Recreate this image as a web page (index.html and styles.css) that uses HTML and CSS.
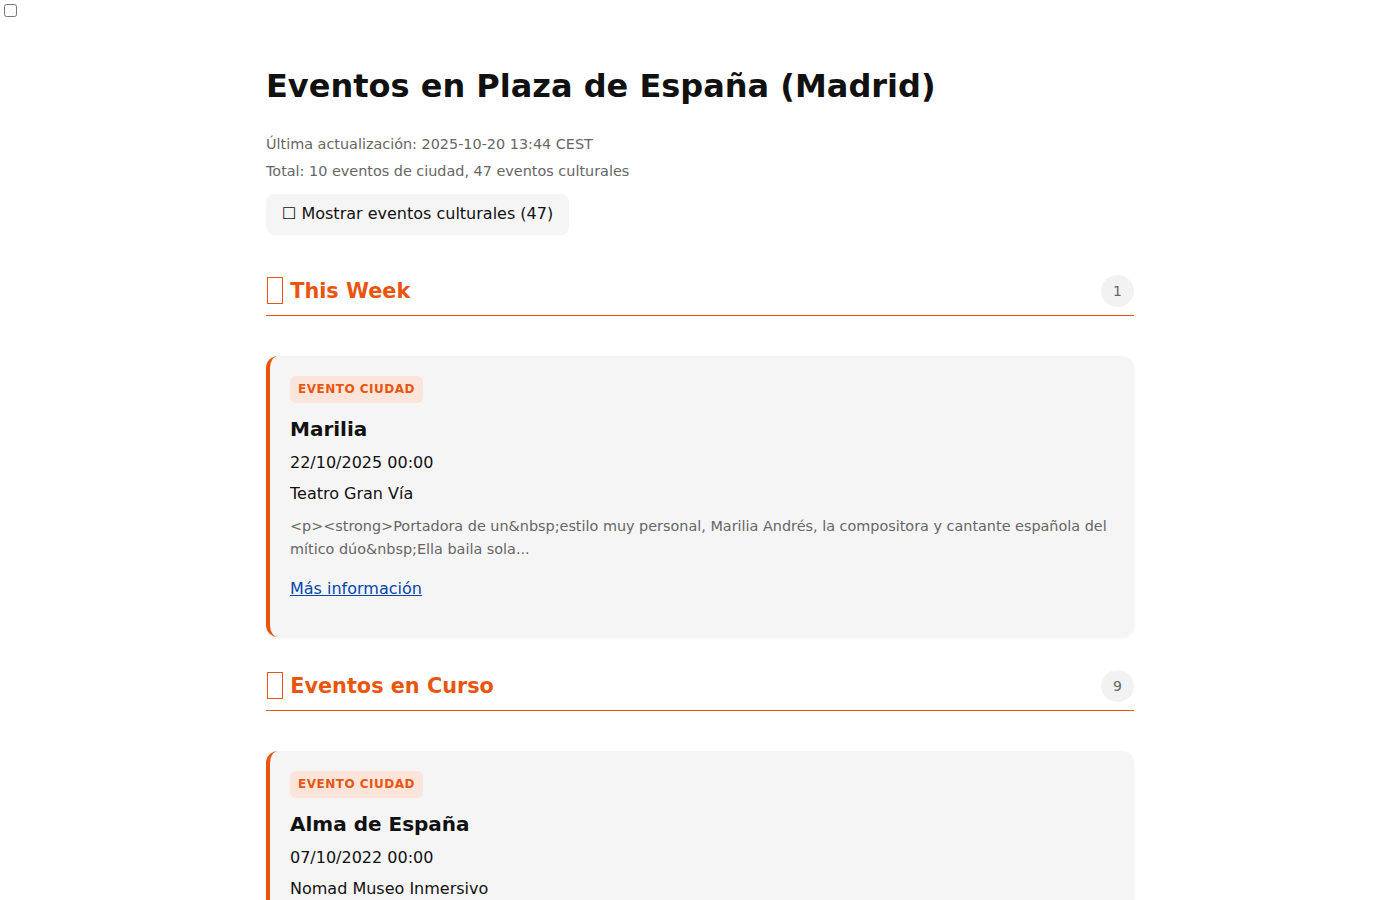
FILE: index.html
```html
<!DOCTYPE html>
<html lang="es">
<head>
<meta charset="utf-8">
<title>Eventos en Plaza de España (Madrid)</title>
<link rel="stylesheet" href="styles.css">
</head>
<body>
<input type="checkbox" class="toggle" id="toggle-cultural">
<main class="container">
  <h1 class="page-title">Eventos en Plaza de España (Madrid)</h1>
  <p class="meta">Última actualización: 2025-10-20 13:44 CEST</p>
  <p class="meta meta-second">Total: 10 eventos de ciudad, 47 eventos culturales</p>
  <button class="toggle-btn" type="button">☐ Mostrar eventos culturales (47)</button>

  <section class="section">
    <div class="section-header">
      <h2 class="section-title"><span class="tofu"></span> This Week</h2>
      <span class="count">1</span>
    </div>
    <article class="card">
      <span class="tag">Evento ciudad</span>
      <h3 class="card-title">Marilia</h3>
      <p class="card-date">22/10/2025 00:00</p>
      <p class="card-venue">Teatro Gran Vía</p>
      <p class="card-desc">&lt;p&gt;&lt;strong&gt;Portadora de un&amp;nbsp;estilo muy personal, Marilia Andrés, la compositora y cantante española del mítico dúo&amp;nbsp;Ella baila sola...</p>
      <a class="card-link" href="#">Más información</a>
    </article>
  </section>

  <section class="section">
    <div class="section-header">
      <h2 class="section-title"><span class="tofu"></span> Eventos en Curso</h2>
      <span class="count">9</span>
    </div>
    <article class="card">
      <span class="tag">Evento ciudad</span>
      <h3 class="card-title">Alma de España</h3>
      <p class="card-date">07/10/2022 00:00</p>
      <p class="card-venue">Nomad Museo Inmersivo</p>
      <p class="card-desc">Una experiencia inmersiva que recorre la cultura, el arte y la historia de España a través de proyecciones de gran formato...</p>
      <a class="card-link" href="#">Más información</a>
    </article>
  </section>
</main>
</body>
</html>
```
FILE: styles.css
```css
* { box-sizing: border-box; }
body {
  margin: 0;
  font-family: "DejaVu Sans", sans-serif;
  color: #111;
  background: #fff;
}
.toggle {
  display: block;
  margin: 4px 3px 3px 4px;
  width: 13px;
  height: 13px;
}
.container {
  max-width: 868px;
  margin: 0 auto;
  padding-top: 46px;
}
.page-title {
  margin: 0;
  font-size: 32px;
  line-height: 40px;
  font-weight: bold;
  color: #111;
}
.meta {
  margin: 28px 0 0;
  font-size: 14.4px;
  line-height: 20px;
  color: #666;
}
.meta-second { margin-top: 7px; }
.toggle-btn {
  display: inline-block;
  margin-top: 13px;
  padding: 10px 16px 12px;
  font-family: "DejaVu Sans", sans-serif;
  font-size: 16px;
  line-height: 19px;
  color: #111;
  background: #f5f5f5;
  border: none;
  border-radius: 8px;
}
.section-header {
  display: flex;
  align-items: center;
  justify-content: space-between;
  margin-top: 40px;
  padding-bottom: 8px;
  border-bottom: 1px solid #e8550f;
}
.section + .section .section-header { margin-top: 33px; }
.section-title {
  margin: 0;
  font-size: 20.8px;
  line-height: 28px;
  font-weight: bold;
  color: #e8550f;
}
.tofu {
  display: inline-block;
  width: 16px;
  height: 27px;
  margin-left: 1px;
  border: 1px solid #e8550f;
  vertical-align: -6px;
}
.count {
  width: 33px;
  height: 32px;
  border-radius: 50%;
  background: #f2f2f2;
  color: #666;
  font-size: 14px;
  display: flex;
  align-items: center;
  justify-content: center;
}
.card {
  margin-top: 40px;
  padding: 20px 20px 38px;
  background: #f5f5f5;
  border-left: 4px solid #e8550f;
  border-radius: 12px;
  box-shadow: 0 1px 3px rgba(0,0,0,0.06);
}
.tag {
  display: inline-block;
  padding: 6px 8px;
  font-size: 12px;
  line-height: 15px;
  font-weight: bold;
  letter-spacing: 0.5px;
  text-transform: uppercase;
  color: #e8550f;
  background: #fbe5da;
  border-radius: 6px;
}
.card-title {
  margin: 14px 0 0;
  font-size: 20px;
  line-height: 24px;
  font-weight: bold;
}
.card-date {
  margin: 12px 0 0;
  font-size: 16px;
  line-height: 20px;
}
.card-venue {
  margin: 11px 0 0;
  font-size: 16px;
  line-height: 20px;
}
.card-desc {
  margin: 11px 0 0;
  font-size: 14.4px;
  line-height: 23px;
  color: #666;
}
.card-link {
  display: inline-block;
  margin-top: 18px;
  font-size: 16px;
  line-height: 20px;
  color: #0645ad;
}
```
